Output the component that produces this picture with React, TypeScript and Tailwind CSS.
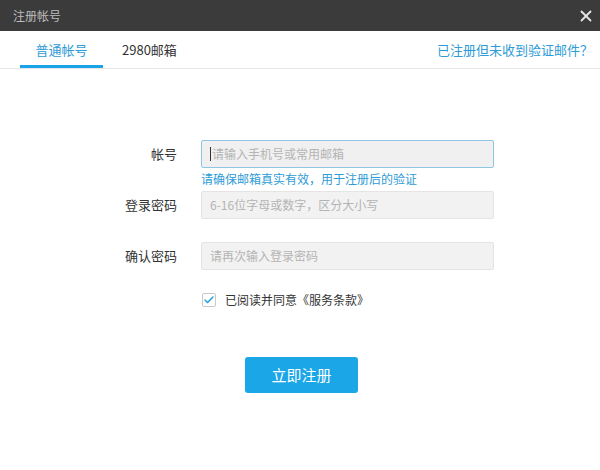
import { X, Check } from 'lucide-react'

const font = { fontFamily: '"Noto Sans CJK SC", "Noto Sans", sans-serif' }

function App() {
  return (
    <div className="w-[600px] h-[470px] bg-white flex flex-col" style={font}>
      {/* Title bar */}
      <div className="h-[31px] bg-[#3b3b3b] flex items-center justify-between pl-[13px] pr-[5px]">
        <span className="text-[12px] text-[#bdbdbd]">注册帐号</span>
        <X size={18} strokeWidth={2.4} className="text-[#e6e6e6]" />
      </div>

      {/* Tabs */}
      <div className="h-[38px] flex items-stretch justify-between border-b border-[#e6e6e6] pl-[20px] pr-[7px]">
        <div className="flex items-stretch">
          <div className="w-[83px] flex items-center justify-center text-[13px] text-[#2e9bd6] border-b-[3px] border-[#1aa3e8] pt-[3px]">
            普通帐号
          </div>
          <div className="ml-[19px] flex items-center text-[13px] text-[#333]">2980邮箱</div>
        </div>
        <a className="flex items-center text-[13px] text-[#2e9bd6]">已注册但未收到验证邮件？</a>
      </div>

      {/* Form */}
      <div className="flex flex-col mt-[71px]">
        <div className="flex items-center">
          <label className="w-[177px] text-right text-[13px] text-[#333]">帐号</label>
          <div className="ml-[24px] w-[293px] h-[28px] bg-[#f0f0f0] border border-[#8ec6e6] rounded-[2px] flex items-center px-[8px]">
            <span className="w-px h-[14px] bg-[#333] mr-[1px]" />
            <span className="text-[12px] text-[#b4b4b4]">请输入手机号或常用邮箱</span>
          </div>
        </div>
        <div className="ml-[201px] mt-[2px] text-[12px] text-[#2e9bd6] leading-[18px]">
          请确保邮箱真实有效，用于注册后的验证
        </div>

        <div className="flex items-center mt-[3px]">
          <label className="w-[177px] text-right text-[13px] text-[#333]">登录密码</label>
          <div className="ml-[24px] w-[293px] h-[28px] bg-[#f2f2f2] border border-[#e4e4e4] rounded-[2px] flex items-center px-[8px]">
            <span className="text-[12px] text-[#b4b4b4]">6-16位字母或数字，区分大小写</span>
          </div>
        </div>

        <div className="flex items-center mt-[23px]">
          <label className="w-[177px] text-right text-[13px] text-[#333]">确认密码</label>
          <div className="ml-[24px] w-[293px] h-[28px] bg-[#f2f2f2] border border-[#e4e4e4] rounded-[2px] flex items-center px-[8px]">
            <span className="text-[12px] text-[#b4b4b4]">请再次输入登录密码</span>
          </div>
        </div>

        <div className="flex items-center ml-[202px] mt-[21px]">
          <div className="w-[14px] h-[14px] border border-[#c8c8c8] rounded-[2px] bg-white flex items-center justify-center">
            <Check size={12} strokeWidth={3} className="text-[#1e9fe0]" />
          </div>
          <span className="ml-[9px] text-[12px] text-[#333]">已阅读并同意《服务条款》</span>
        </div>

        <div className="flex justify-center mt-[48px] pl-[3px]">
          <button className="w-[113px] h-[36px] rounded-[3px] bg-[#1ba6e8] text-white text-[15px]">
            立即注册
          </button>
        </div>
      </div>
    </div>
  )
}

export default App
